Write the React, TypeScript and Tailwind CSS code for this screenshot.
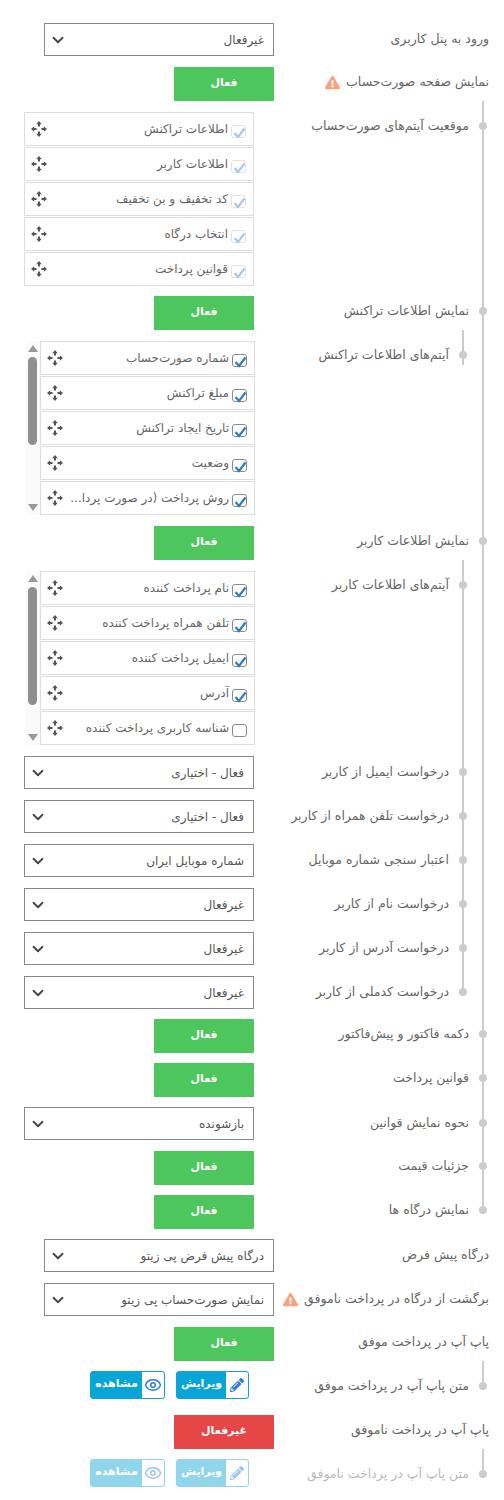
import type { ReactNode } from 'react'
import { ChevronDown, Eye } from 'lucide-react'
import { FaExclamationTriangle, FaPencilAlt } from 'react-icons/fa'

type Kind = 'select' | 'button' | 'list'

function Row({
  label,
  level = 0,
  kind,
  warn,
  muted,
  wide,
  className = '',
  children,
}: {
  label: string
  level?: 0 | 1 | 2
  kind: Kind
  warn?: boolean
  muted?: boolean
  wide?: boolean
  className?: string
  children: ReactNode
}) {
  return (
    <div className={`flex items-start ${className}`}>
      <div
        className={`relative shrink-0 flex items-center gap-[6px] text-[12.5px] leading-[28px] whitespace-nowrap ${
          wide ? 'w-[194px]' : level === 2 ? 'w-[195px]' : 'w-[215px]'
        } ${kind === 'select' ? 'pt-[2px]' : kind === 'button' ? 'pt-[1px]' : ''} ${
          muted ? 'text-[#bbbbbb]' : 'text-[#666666]'
        }`}
      >
        <span>{label}</span>
        {warn && <FaExclamationTriangle size={15} className="text-[#f9a27c] shrink-0" />}
        {level > 0 && (
          <span
            className={`absolute right-[-18px] w-2 h-2 rounded-full bg-[#cccccc] ${
              kind === 'select' ? 'top-[12px]' : kind === 'button' ? 'top-[11px]' : 'top-[10px]'
            }`}
          />
        )}
      </div>
      {children}
    </div>
  )
}

function SelectBox({ value }: { value: string }) {
  return (
    <div className="w-[230px] h-[33px] border border-[#888888] bg-white flex items-center justify-between pr-[9px] pl-[4px] text-[#555555]">
      <span>{value}</span>
      <ChevronDown size={18} strokeWidth={2.4} className="text-[#444444]" />
    </div>
  )
}

function Toggle({ on = true }: { on?: boolean }) {
  return (
    <button
      className={`w-[100px] h-[34px] text-white text-[11px] font-bold flex items-center justify-center pb-[2px] ${
        on ? 'bg-[#4dc65e]' : 'bg-[#e54646]'
      }`}
    >
      {on ? 'فعال' : 'غیرفعال'}
    </button>
  )
}

function MoveIcon() {
  return (
    <svg width="16" height="16" viewBox="0 0 16 16" className="shrink-0 text-[#555555]" fill="currentColor">
      <path d="M8 0 10.8 3.2H9V5.5H7V3.2H5.2z" />
      <path d="M8 16 5.2 12.8H7V10.5H9V12.8H10.8z" />
      <path d="M0 8 3.2 5.2V7H5.5V9H3.2V10.8z" />
      <path d="M16 8 12.8 10.8V9H10.5V7H12.8V5.2z" />
    </svg>
  )
}

function CheckBox({ checked = true, faded }: { checked?: boolean; faded?: boolean }) {
  return (
    <span
      className={`relative shrink-0 w-[15px] h-[13px] mt-[4px] rounded-[3px] border bg-white ${
        faded ? 'border-[#e2e2e2]' : 'border-[#8a8a8a]'
      }`}
    >
      {checked && (
        <svg
          width="13"
          height="12"
          viewBox="0 0 13 12"
          fill="none"
          className={`absolute left-[1px] top-[1px] ${faded ? 'text-[#a9c8e6]' : 'text-[#2f7ec4]'}`}
        >
          <path d="M1.5 6 5 10 11.5 1.5" stroke="currentColor" strokeWidth="2.2" />
        </svg>
      )}
    </span>
  )
}

function ListItem({ text, checked, faded }: { text: string; checked?: boolean; faded?: boolean }) {
  return (
    <div className="h-[34px] border border-[#dddddd] bg-white flex items-center pr-[7px] pl-[6px] gap-[3px]">
      <CheckBox checked={checked} faded={faded} />
      <span className="flex-1 min-w-0 whitespace-nowrap text-[#666666]">{text}</span>
      <span className="pr-[9px]">
        <MoveIcon />
      </span>
    </div>
  )
}

function ScrollList({
  items,
  thumb,
}: {
  items: { text: string; checked?: boolean }[]
  thumb: string
}) {
  return (
    <div className="flex w-[229px]">
      <div className="flex-1 min-w-0 flex flex-col gap-[1px]">
        {items.map((item) => (
          <ListItem key={item.text} text={item.text} checked={item.checked} />
        ))}
      </div>
      <div className="w-[14px] shrink-0 bg-[#fafafa] flex flex-col items-center pr-[1px] py-[4px]">
        <svg width="10" height="7" viewBox="0 0 10 7" className="text-[#999999]" fill="currentColor">
          <path d="M5 0 10 7H0z" />
        </svg>
        <div className={`w-[9px] mt-[5px] rounded-full bg-[#8f8f8f] ${thumb}`} />
        <svg width="10" height="7" viewBox="0 0 10 7" className="mt-auto text-[#999999]" fill="currentColor">
          <path d="M0 0H10L5 7z" />
        </svg>
      </div>
    </div>
  )
}

function ActionButton({ text, icon, width }: { text: string; icon: ReactNode; width: string }) {
  return (
    <button className="h-[28px] flex rounded-[3px] border border-[#0aa5d8] overflow-hidden bg-[#0aa5d8] text-white text-[11px] font-bold">
      <span className="w-[22px] bg-white flex items-center justify-center text-[#2a7fdc]">{icon}</span>
      <span className={`${width} flex items-center justify-center pb-[2px]`}>{text}</span>
    </button>
  )
}

function Actions({ faded }: { faded?: boolean }) {
  return (
    <div className={`w-[230px] pr-[5px] flex gap-[11px] ${faded ? 'opacity-45' : ''}`}>
      <ActionButton text="ویرایش" width="w-[49px]" icon={<FaPencilAlt size={14} />} />
      <ActionButton text="مشاهده" width="w-[51px]" icon={<Eye size={18} strokeWidth={2} />} />
    </div>
  )
}

function Line({ className }: { className: string }) {
  return <span className={`absolute right-[5px] w-[2px] bg-[#cccccc] ${className}`} />
}

const invoiceItems = [
  'اطلاعات تراکنش',
  'اطلاعات کاربر',
  'کد تخفیف و بن تخفیف',
  'انتخاب درگاه',
  'قوانین پرداخت',
]

const transactionItems = [
  { text: 'شماره صورت‌حساب' },
  { text: 'مبلغ تراکنش' },
  { text: 'تاریخ ایجاد تراکنش' },
  { text: 'وضعیت' },
  { text: 'روش پرداخت (در صورت پردا...' },
]

const userItems = [
  { text: 'نام پرداخت کننده' },
  { text: 'تلفن همراه پرداخت کننده' },
  { text: 'ایمیل پرداخت کننده' },
  { text: 'آدرس' },
  { text: 'شناسه کاربری پرداخت کننده', checked: false },
]

const requestRows = [
  ['درخواست ایمیل از کاربر', 'فعال - اختیاری'],
  ['درخواست تلفن همراه از کاربر', 'فعال - اختیاری'],
  ['اعتبار سنجی شماره موبایل', 'شماره موبایل ایران'],
  ['درخواست نام از کاربر', 'غیرفعال'],
  ['درخواست آدرس از کاربر', 'غیرفعال'],
  ['درخواست کدملی از کاربر', 'غیرفعال'],
]

export default function App() {
  return (
    <div
      dir="rtl"
      className="w-[504px] min-h-[1500px] bg-white pt-[23px] pr-[15px] text-[12px] font-['DejaVu_Sans',sans-serif]"
    >
      <Row label="ورود به پنل کاربری" kind="select" className="mb-[11px]">
        <SelectBox value="غیرفعال" />
      </Row>
      <Row label="نمایش صفحه صورت‌حساب" kind="button" warn>
        <Toggle />
      </Row>

      <div className="relative pr-[20px] pt-[11px]">
        <Line className="top-0 bottom-[19px]" />
        <Row label="موقعیت آیتم‌های صورت‌حساب" level={1} kind="list" className="mb-[10px]">
          <div className="w-[230px] flex flex-col gap-[1px]">
            {invoiceItems.map((text) => (
              <ListItem key={text} text={text} faded />
            ))}
          </div>
        </Row>
        <Row label="نمایش اطلاعات تراکنش" level={1} kind="button">
          <Toggle />
        </Row>

        <div className="relative pr-[20px] pt-[11px] mb-[11px]">
          <Line className="top-0 bottom-[150px]" />
          <Row label="آیتم‌های اطلاعات تراکنش" level={2} kind="list" wide>
            <ScrollList items={transactionItems} thumb="h-[88px]" />
          </Row>
        </div>

        <Row label="نمایش اطلاعات کاربر" level={1} kind="button">
          <Toggle />
        </Row>

        <div className="relative pr-[20px] pt-[11px] mb-[10px]">
          <Line className="top-0 bottom-[17px]" />
          <Row label="آیتم‌های اطلاعات کاربر" level={2} kind="list" wide className="mb-[11px]">
            <ScrollList items={userItems} thumb="h-[118px]" />
          </Row>
          {requestRows.map(([label, value], i) => (
            <Row
              key={label}
              label={label}
              level={2}
              kind="select"
              className={i < requestRows.length - 1 ? 'mb-[11px]' : ''}
            >
              <SelectBox value={value} />
            </Row>
          ))}
        </div>

        <Row label="دکمه فاکتور و پیش‌فاکتور" level={1} kind="button" className="mb-[10px]">
          <Toggle />
        </Row>
        <Row label="قوانین پرداخت" level={1} kind="button" className="mb-[10px]">
          <Toggle />
        </Row>
        <Row label="نحوه نمایش قوانین" level={1} kind="select" className="mb-[11px]">
          <SelectBox value="بازشونده" />
        </Row>
        <Row label="جزئیات قیمت" level={1} kind="button" className="mb-[10px]">
          <Toggle />
        </Row>
        <Row label="نمایش درگاه ها" level={1} kind="button">
          <Toggle />
        </Row>
      </div>

      <Row label="درگاه پیش فرض" kind="select" className="mt-[10px] mb-[11px]">
        <SelectBox value="درگاه پیش فرض پی زیتو" />
      </Row>
      <Row label="برگشت از درگاه در پرداخت ناموفق" kind="select" warn className="mb-[11px]">
        <SelectBox value="نمایش صورت‌حساب پی زیتو" />
      </Row>
      <Row label="پاپ آپ در پرداخت موفق" kind="button">
        <Toggle />
      </Row>
      <div className="relative pr-[20px] pt-[10px] mb-[15px]">
        <Line className="top-0 bottom-[13px]" />
        <Row label="متن پاپ آپ در پرداخت موفق" level={1} kind="button">
          <Actions />
        </Row>
      </div>
      <Row label="پاپ آپ در پرداخت ناموفق" kind="button">
        <Toggle on={false} />
      </Row>
      <div className="relative pr-[20px] pt-[10px]">
        <Line className="top-0 bottom-[13px]" />
        <Row label="متن پاپ آپ در پرداخت ناموفق" level={1} kind="button" muted>
          <Actions faded />
        </Row>
      </div>
    </div>
  )
}
